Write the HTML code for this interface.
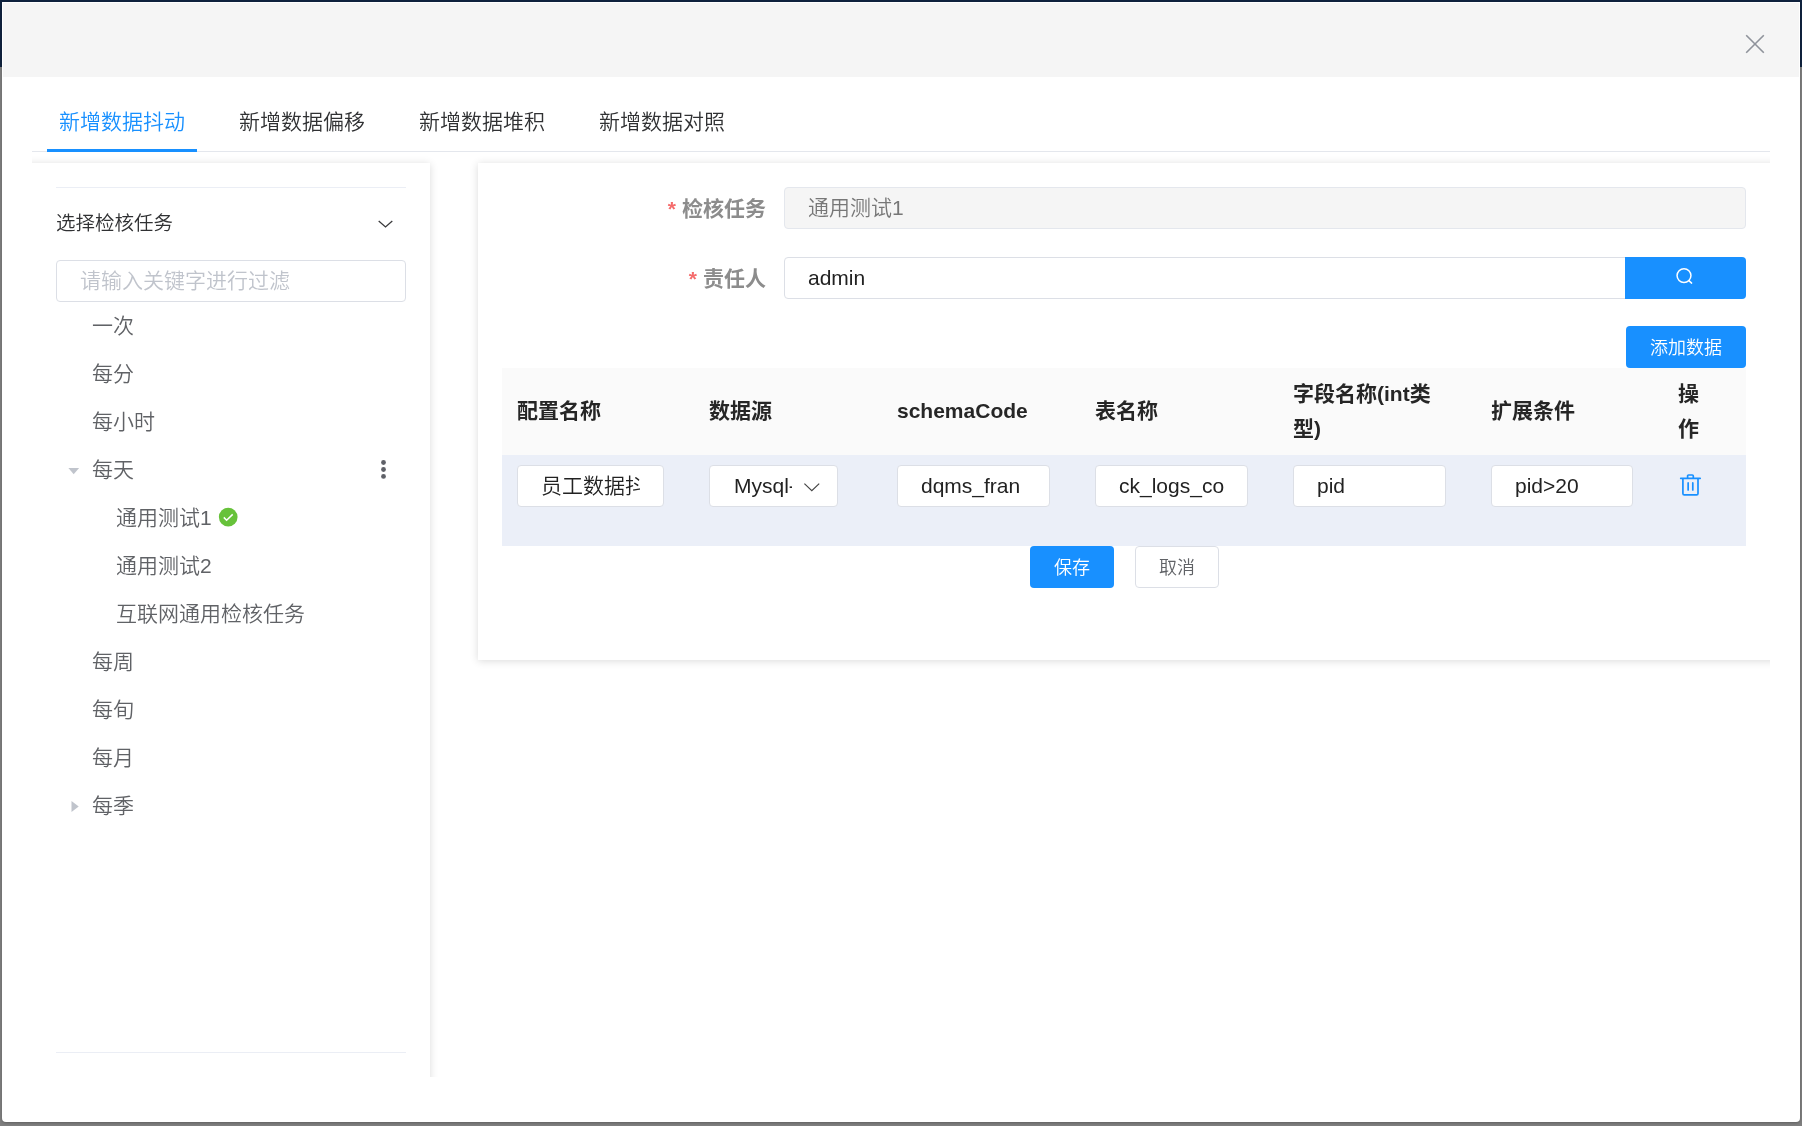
<!DOCTYPE html>
<html lang="zh-CN">
<head>
<meta charset="utf-8">
<title>新增数据抖动</title>
<style>
*{box-sizing:border-box;margin:0;padding:0}
html,body{width:1802px;height:1126px;overflow:hidden}
body{position:relative;background:#7f7f7f;font-family:"Liberation Sans","Noto Sans CJK SC",sans-serif;color:#606266;font-size:21px;font-weight:350}
.a{position:absolute}
.bgtop{left:0;top:0;width:1802px;height:67px;background:#10233f}
.modal{left:2px;top:2px;width:1798px;height:1120px;background:#fff;border-radius:0 0 4px 4px;box-shadow:0 1px 3px rgba(0,0,0,.25);overflow:hidden}
.mhead{left:1px;top:1px;width:1796px;height:74px;background:#f5f5f5}
/* everything inside .modal is positioned in page coords via .pg wrapper */
.pg{left:-2px;top:-2px;width:1802px;height:1126px;will-change:transform}
.tab{top:105px;height:34px;line-height:34px;font-size:21px;color:#303133;white-space:nowrap}
.tab.on{color:#1890ff}
.tabline{left:32px;top:151px;width:1738px;height:1px;background:#e4e7ed}
.tabbar{left:47px;top:149px;width:150px;height:3px;background:#1890ff}
.clip{left:32px;top:153px;width:1738px;height:924px;overflow:hidden}
.in{left:-32px;top:-153px;width:1802px;height:1126px}
.card{background:#fff;box-shadow:0 1px 8px 0 rgba(0,0,0,.15)}
.hr{height:1px;background:#ebeef5}
.tn{height:48px;line-height:48px;font-size:21px;color:#606266;white-space:nowrap}
.inp{height:42px;border:1px solid #dcdfe6;border-radius:4px;background:#fff;overflow:hidden;white-space:nowrap;font-size:21px;line-height:40px;color:#222}
.inp span{display:block;overflow:hidden;white-space:nowrap}
.lab{font-weight:bold;color:#8c8c8c;font-size:21px;line-height:44px;height:42px;text-align:right;white-space:nowrap}
.lab i{font-style:normal;color:#f56c6c;font-weight:bold;margin-right:6px}
.btn{height:42px;border-radius:4px;font-size:18px;line-height:44px;text-align:center;white-space:nowrap}
.btn.p{background:#1890ff;color:#fff}
.th{font-weight:bold;color:#262626;font-size:21px;line-height:34.5px}
</style>
</head>
<body>
<div class="a bgtop"></div>
<div class="a modal"><div class="a pg">
  <div class="a mhead" style="left:3px;top:3px"></div>
  <svg class="a" style="left:1745px;top:34px" width="20" height="20" viewBox="0 0 20 20"><path d="M1.2 1.2 L18.8 18.8 M18.8 1.2 L1.2 18.8" stroke="#8f939b" stroke-width="1.6" fill="none"/></svg>

  <div class="a tab on" style="left:59px">新增数据抖动</div>
  <div class="a tab" style="left:239px">新增数据偏移</div>
  <div class="a tab" style="left:419px">新增数据堆积</div>
  <div class="a tab" style="left:599px">新增数据对照</div>
  <div class="a tabline"></div>
  <div class="a tabbar"></div>

  <div class="a clip"><div class="a in">
    <!-- left card -->
    <div class="a card" style="left:20px;top:163px;width:410px;height:1000px"></div>
    <div class="a hr" style="left:56px;top:187px;width:350px"></div>
    <div class="a" style="left:56px;top:206px;height:34px;line-height:34px;font-size:19.5px;color:#303133;white-space:nowrap">选择检核任务</div>
    <svg class="a" style="left:376px;top:216px" width="18" height="14" viewBox="0 0 18 14"><path d="M2.7 4.9 L9.5 11 L16.3 4.9" stroke="#3a3a3c" stroke-width="1.3" fill="none"/></svg>
    <div class="a inp" style="left:56px;top:260px;width:350px;padding-left:23px;color:#c0c4cc">请输入关键字进行过滤</div>

    <div class="a tn" style="left:92px;top:302px">一次</div>
    <div class="a tn" style="left:92px;top:350px">每分</div>
    <div class="a tn" style="left:92px;top:398px">每小时</div>
    <svg class="a" style="left:67px;top:466px" width="14" height="10" viewBox="0 0 14 10"><path d="M1.4 1.9 H12.1 L6.7 8.3 Z" fill="#c0c4cc"/></svg>
    <div class="a tn" style="left:92px;top:446px">每天</div>
    <svg class="a" style="left:379px;top:458px" width="10" height="24" viewBox="0 0 10 24"><circle cx="4.5" cy="4.5" r="2.4" fill="#5f6168"/><circle cx="4.5" cy="11.5" r="2.4" fill="#5f6168"/><circle cx="4.5" cy="18.4" r="2.4" fill="#5f6168"/></svg>
    <div class="a tn" style="left:116px;top:494px">通用测试1</div>
    <svg class="a" style="left:218px;top:507px" width="20" height="20" viewBox="0 0 20 20"><circle cx="10.2" cy="10.1" r="9.35" fill="#67c23a"/><path d="M5.8 10.4 L8.6 13.2 L14.7 7.4" stroke="#fff" stroke-width="1.5" fill="none"/></svg>
    <div class="a tn" style="left:116px;top:542px">通用测试2</div>
    <div class="a tn" style="left:116px;top:590px">互联网通用检核任务</div>
    <div class="a tn" style="left:92px;top:638px">每周</div>
    <div class="a tn" style="left:92px;top:686px">每旬</div>
    <div class="a tn" style="left:92px;top:734px">每月</div>
    <svg class="a" style="left:70px;top:799px" width="10" height="15" viewBox="0 0 10 15"><path d="M1.5 2 V12.9 L8.7 7.4 Z" fill="#c0c4cc"/></svg>
    <div class="a tn" style="left:92px;top:782px">每季</div>
    <div class="a hr" style="left:56px;top:1052px;width:350px"></div>

    <!-- right card -->
    <div class="a card" style="left:478px;top:163px;width:1320px;height:497px"></div>
    <div class="a lab" style="left:560px;top:187px;width:206px"><i>*</i>检核任务</div>
    <div class="a inp" style="left:784px;top:187px;width:962px;padding-left:23px;background:#f5f5f5;border-color:#e4e7ed;color:#777">通用测试1</div>
    <div class="a lab" style="left:560px;top:257px;width:206px"><i>*</i>责任人</div>
    <div class="a inp" style="left:784px;top:257px;width:844px;padding-left:23px;border-radius:4px 0 0 4px">admin</div>
    <div class="a" style="left:1625px;top:257px;width:121px;height:42px;background:#1890ff;border-radius:0 4px 4px 0"></div>
    <svg class="a" style="left:1674px;top:265px" width="22" height="22" viewBox="0 0 22 22"><circle cx="10" cy="10.6" r="6.95" stroke="#fff" stroke-width="1.5" fill="none"/><path d="M14.9 15.6 L17.6 18.1" stroke="#fff" stroke-width="1.5" fill="none" stroke-linecap="round"/></svg>
    <div class="a btn p" style="left:1626px;top:326px;width:120px">添加数据</div>

    <!-- table -->
    <div class="a" style="left:502px;top:368px;width:1244px;height:87px;background:#fafafa"></div>
    <div class="a" style="left:502px;top:455px;width:1244px;height:91px;background:#ebeff8"></div>
    <div class="a th" style="left:517px;top:394px">配置名称</div>
    <div class="a th" style="left:709px;top:394px">数据源</div>
    <div class="a th" style="left:897px;top:394px">schemaCode</div>
    <div class="a th" style="left:1095px;top:394px">表名称</div>
    <div class="a th" style="left:1293px;top:377px;width:160px">字段名称(int类型)</div>
    <div class="a th" style="left:1491px;top:394px">扩展条件</div>
    <div class="a th" style="left:1678px;top:377px;width:30px">操作</div>

    <div class="a inp" style="left:517px;top:465px;width:147px;padding:0 23px"><span>员工数据抖动配置</span></div>
    <div class="a inp" style="left:709px;top:465px;width:129px;padding:0 45px 0 24px"><span>Mysql-dqms</span></div>
    <svg class="a" style="left:803px;top:480px" width="18" height="14" viewBox="0 0 18 14"><path d="M1.4 3.6 L8.8 10.6 L16.2 3.6" stroke="#444" stroke-width="1.2" fill="none"/></svg>
    <div class="a inp" style="left:897px;top:465px;width:153px;padding:0 23px"><span>dqms_fran</span></div>
    <div class="a inp" style="left:1095px;top:465px;width:153px;padding:0 23px"><span>ck_logs_co</span></div>
    <div class="a inp" style="left:1293px;top:465px;width:153px;padding:0 23px"><span>pid</span></div>
    <div class="a inp" style="left:1491px;top:465px;width:142px;padding:0 23px"><span>pid&gt;20</span></div>
    <svg class="a" style="left:1679px;top:473px" width="23" height="24" viewBox="0 0 23 24"><path d="M1.7 5.3 H21.2 M8.6 5.3 V3 Q8.6 2 9.6 2 H13.3 Q14.3 2 14.3 3 V5.3 M3.9 5.3 V20.5 Q3.9 21.9 5.3 21.9 H17.6 Q19 21.9 19 20.5 V5.3 M9.15 9.9 V17 M13.8 9.9 V17" stroke="#1890ff" stroke-width="1.7" fill="none" stroke-linecap="round"/></svg>

    <div class="a btn p" style="left:1030px;top:546px;width:84px">保存</div>
    <div class="a btn" style="left:1135px;top:546px;width:84px;border:1px solid #dcdfe6;background:#fff;color:#606266;line-height:42px">取消</div>
  </div></div>
</div></div>
</body>
</html>
